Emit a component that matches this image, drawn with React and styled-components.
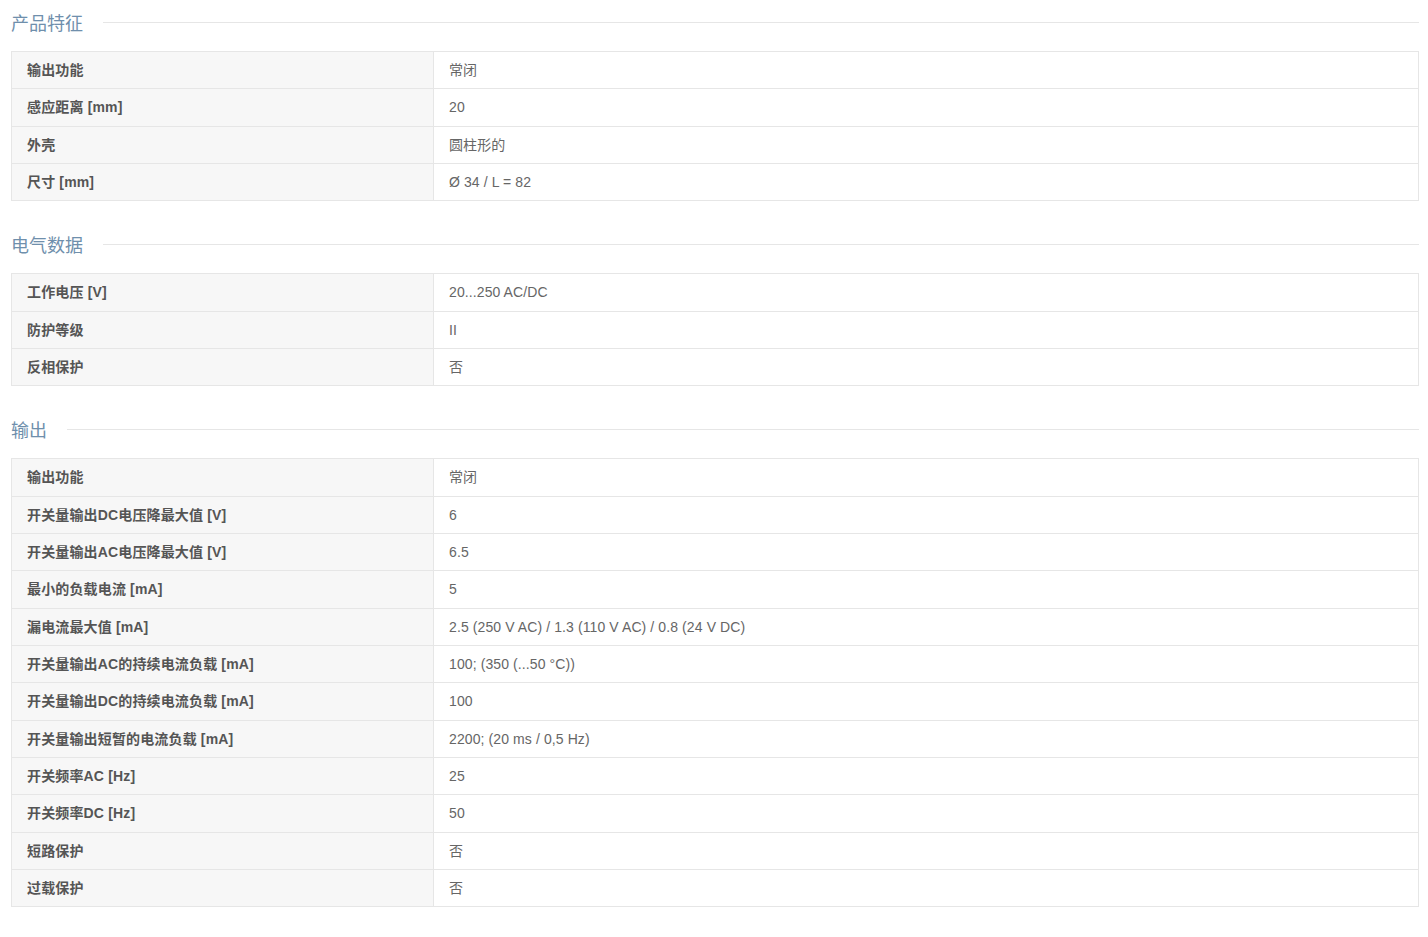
import React from "react";
import styled, { createGlobalStyle } from "styled-components";

const sections = [
  {
    title: "产品特征",
    rows: [
      ["输出功能", "常闭"],
      ["感应距离 [mm]", "20"],
      ["外壳", "圆柱形的"],
      ["尺寸 [mm]", "Ø 34 / L = 82"],
    ],
  },
  {
    title: "电气数据",
    rows: [
      ["工作电压 [V]", "20...250 AC/DC"],
      ["防护等级", "II"],
      ["反相保护", "否"],
    ],
  },
  {
    title: "输出",
    rows: [
      ["输出功能", "常闭"],
      ["开关量输出DC电压降最大值 [V]", "6"],
      ["开关量输出AC电压降最大值 [V]", "6.5"],
      ["最小的负载电流 [mA]", "5"],
      ["漏电流最大值 [mA]", "2.5 (250 V AC) / 1.3 (110 V AC) / 0.8 (24 V DC)"],
      ["开关量输出AC的持续电流负载 [mA]", "100; (350 (...50 °C))"],
      ["开关量输出DC的持续电流负载 [mA]", "100"],
      ["开关量输出短暂的电流负载 [mA]", "2200; (20 ms / 0,5 Hz)"],
      ["开关频率AC [Hz]", "25"],
      ["开关频率DC [Hz]", "50"],
      ["短路保护", "否"],
      ["过载保护", "否"],
    ],
  },
];

const App = () => {
  return (
    <Page>
      <GlobalStyle />
      {sections.map((s) => (
        <Section key={s.title}>
          <Heading>
            <HeadingText>{s.title}</HeadingText>
            <HeadingLine />
          </Heading>
          <Table>
            <colgroup>
              <LabelCol />
              <col />
            </colgroup>
            <tbody>
              {s.rows.map(([label, value], i) => (
                <Row key={i}>
                  <Label>{label}</Label>
                  <Value>{value}</Value>
                </Row>
              ))}
            </tbody>
          </Table>
        </Section>
      ))}
    </Page>
  );
};

const GlobalStyle = createGlobalStyle`
  body {
    margin: 0;
    background: #fff;
    font-family: "Liberation Sans", "Noto Sans CJK SC", sans-serif;
  }
`;

const Page = styled.div`
  padding: 7px 9px 20px 11px;
`;

const Section = styled.section`
  & + & {
    margin-top: 28px;
  }
`;

const Heading = styled.div`
  display: flex;
  align-items: center;
  gap: 20px;
  height: 30px;
  margin-bottom: 14px;
`;

const HeadingText = styled.h2`
  margin: 0;
  font-size: 18px;
  font-weight: 400;
  color: #6f8fac;
  white-space: nowrap;
`;

const HeadingLine = styled.div`
  flex: 1;
  height: 1px;
  background: #e6e6e6;
`;

const Table = styled.table`
  width: 100%;
  border-collapse: collapse;
  table-layout: fixed;
  border: 1px solid #e6e6e6;
`;

const LabelCol = styled.col`
  width: 422px;
`;

const Row = styled.tr`
  border-top: 1px solid #e6e6e6;
`;

const Label = styled.td`
  padding: 8px 15px;
  line-height: 20.33px;
  font-size: 14px;
  font-weight: 700;
  letter-spacing: 0.15px;
  color: #555;
  background: #f7f7f7;
  border-right: 1px solid #e6e6e6;
`;

const Value = styled.td`
  padding: 8px 15px;
  line-height: 20.33px;
  font-size: 14px;
  letter-spacing: 0.1px;
  color: #666;
  background: #fff;
`;

export default App;
